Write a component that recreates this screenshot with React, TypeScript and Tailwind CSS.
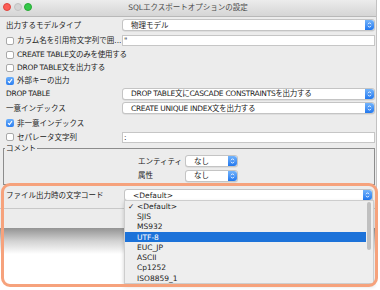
import React from 'react';

const Stepper = () => (
  <div className="flex h-full w-[9px] shrink-0 items-center justify-center rounded-r-[3px] bg-gradient-to-b from-[#72b3fb] to-[#1f77ee]">
    <svg width="5" height="8" viewBox="0 0 5 8">
      <path d="M1 3.2 L2.5 1.7 L4 3.2 M1 4.8 L2.5 6.3 L4 4.8" stroke="white" strokeWidth="0.9" fill="none" />
    </svg>
  </div>
);

const Select = ({ value, className = '', tight = false }: { value: string; className?: string; tight?: boolean }) => (
  <div className={`flex h-[12px] items-stretch rounded-[3px] border border-[#c4c4c4] bg-white shadow-[0_0.5px_0.5px_rgba(0,0,0,0.12)] ${className}`}>
    <span className={`flex flex-1 items-center truncate pl-[8px] ${tight ? 'tracking-[-0.3px]' : ''}`}>{value}</span>
    <Stepper />
  </div>
);

const TextBox = ({ value }: { value: string }) => (
  <div className="flex h-[11px] w-full items-center border border-[#c6c6c6] bg-white pl-[1px]">{value}</div>
);

const Check = ({ on = false }: { on?: boolean }) =>
  on ? (
    <span className="flex h-[8px] w-[8px] shrink-0 items-center justify-center rounded-[2px] bg-gradient-to-b from-[#6aaefa] to-[#2a7ef0]">
      <svg width="6" height="6" viewBox="0 0 6 6">
        <path d="M1 3.2 L2.4 4.6 L5 1.2" stroke="white" strokeWidth="1.1" fill="none" />
      </svg>
    </span>
  ) : (
    <span className="h-[8px] w-[8px] shrink-0 rounded-[2px] border border-[#a9a9a9] bg-white" />
  );

const Row = ({ h, label, children }: { h: string; label: React.ReactNode; children?: React.ReactNode }) => (
  <div className={`flex items-center ${h}`}>
    <div className="flex w-[122px] items-center gap-[3px] pl-[6px]">{label}</div>
    <div className="w-[253px]">{children}</div>
  </div>
);

const encodings = ['<Default>', 'SJIS', 'MS932', 'UTF-8', 'EUC_JP', 'ASCII', 'Cp1252', 'ISO8859_1'];

export default function App() {
  return (
    <div className="relative h-[290px] w-[380px] overflow-hidden bg-white text-[7.5px] leading-[9px] text-[#222] font-['DejaVu_Sans','Noto_Sans_CJK_JP',sans-serif]">
      <div className="flex w-[377px] flex-col border-r border-[#c2c2c2] bg-[#ececec]">
        {/* title bar */}
        <div className="grid h-[17px] grid-cols-[60px_1fr_60px] border-b border-[#b8b8b8] bg-gradient-to-b from-[#ececec] to-[#d5d5d5]">
          <div className="flex items-start gap-[2.5px] pl-[3px] pt-[3px]">
            <span className="h-[8px] w-[8px] rounded-full border border-[#e0443e] bg-[#fc5f57]" />
            <span className="h-[8px] w-[8px] rounded-full border border-[#c2c2c2] bg-[#d4d4d4]" />
            <span className="h-[8px] w-[8px] rounded-full border border-[#27aa35] bg-[#35c84a]" />
          </div>
          <div className="flex items-center justify-center pb-[1px] text-[#4b4b4b]">SQLエクスポートオプションの設定</div>
          <div />
        </div>

        <Row h="h-[16px]" label="出力するモデルタイプ">
          <Select value="物理モデル" />
        </Row>
        <Row h="h-[15px]" label={<><Check /><span className="truncate">カラム名を引用符文字列で囲...</span></>}>
          <TextBox value={'"'} />
        </Row>
        <Row h="h-[13px]" label={<><Check /><span className="whitespace-nowrap tracking-[-0.25px]">CREATE TABLE文のみを使用する</span></>} />
        <Row h="h-[13px]" label={<><Check /><span className="whitespace-nowrap tracking-[-0.25px]">DROP TABLE文を出力する</span></>} />
        <Row h="h-[13px]" label={<><Check on /><span>外部キーの出力</span></>} />
        <Row h="h-[13px]" label={<span className="tracking-[-0.3px]">DROP TABLE</span>}>
          <Select value="DROP TABLE文にCASCADE CONSTRAINTSを出力する" tight />
        </Row>
        <Row h="h-[16px]" label="一意インデックス">
          <Select value="CREATE UNIQUE INDEX文を出力する" tight />
        </Row>
        <Row h="h-[14px]" label={<><Check on /><span>非一意インデックス</span></>} />
        <Row h="h-[14px]" label={<><Check /><span>セパレータ文字列</span></>}>
          <TextBox value=":" />
        </Row>

        {/* comment group */}
        <fieldset className="ml-[3px] w-[372px] border border-[#8c8c8c] pb-[1px]">
          <legend className="ml-[1px] px-[1px]">コメント</legend>
          <div className="mt-[1px] flex h-[14px] items-center pl-[134px]">
            <span className="w-[47px]">エンティティ</span>
            <Select value="なし" className="w-[53px]" />
          </div>
          <div className="flex h-[15px] items-center pl-[134px]">
            <span className="w-[47px]">属性</span>
            <Select value="なし" className="w-[53px]" />
          </div>
        </fieldset>

        <Row h="h-[20px]" label="ファイル出力時の文字コード">
          <Select value="<Default>" className="ml-[2px] w-[249px]" />
        </Row>
        <div className="mt-[3px] border-t border-[#c8c8c8]" />
        <div className="h-[19px]" />
      </div>
      <div className="h-[26px] w-[377px] bg-gradient-to-b from-[#939393] via-[#d2d2d2] to-white" />

      {/* open dropdown menu */}
      <div className="absolute left-[124px] top-[200px] h-[84px] w-[250px] border border-[#cdcdcd] bg-[#eeeeee] shadow-[0_2px_4px_rgba(0,0,0,0.2)]">
        {encodings.map((e, i) => (
          <div
            key={e}
            className={`mr-[7px] flex h-[10.3px] items-center ${i === 3 ? 'bg-[#1c72d9] text-white' : ''} ${i === 0 ? 'pl-[3px]' : 'pl-[12px]'}`}
          >
            {i === 0 && <span className="w-[9px]">✓</span>}
            {e}
          </div>
        ))}
        <div className="absolute right-[2px] top-[1px] h-[48px] w-[4px] rounded-full bg-[#c0c0c0]" />
      </div>

      {/* annotation outline */}
      <div className="pointer-events-none absolute left-[1px] top-[183px] h-[104px] w-[377px] rounded-[9px] border-[3px] border-[#f6a27c] blur-[0.4px]" />
    </div>
  );
}
